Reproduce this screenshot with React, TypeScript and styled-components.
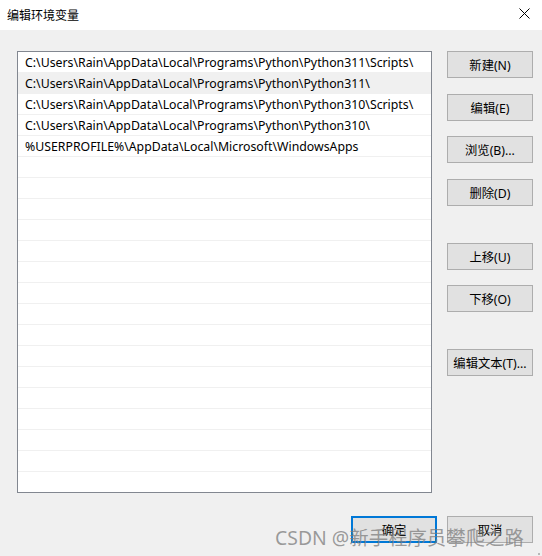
import React from "react";
import styled, { createGlobalStyle } from "styled-components";

const Global = createGlobalStyle`
  html, body { margin: 0; padding: 0; background: #f0f0f0; }
  body { font-family: "Noto Sans", "Noto Sans CJK SC", sans-serif; }
  * { box-sizing: border-box; }
`;

const Window = styled.div`
  position: relative;
  width: 542px;
  height: 556px;
  background: #f0f0f0;
  display: flex;
  flex-direction: column;
  overflow: hidden;
  font-family: "Noto Sans", "Noto Sans CJK SC", sans-serif;
  font-size: 12px;
  color: #000;
`;

const TitleBar = styled.div`
  height: 30px;
  background: #fff;
  display: flex;
  align-items: center;
  justify-content: space-between;
  padding: 0 6px 1px 7px;
`;

const Title = styled.div`
  font-size: 12px;
  color: #000;
`;

const CloseBtn = styled.div`
  width: 36px;
  height: 30px;
  display: flex;
  align-items: center;
  justify-content: center;
  margin-right: -6px;
  margin-top: -2px;
`;

const Body = styled.div`
  flex: 1;
  display: flex;
  flex-direction: column;
  padding: 21px 9px 0 17px;
`;

const Main = styled.div`
  display: flex;
  gap: 15px;
`;

const ListBox = styled.div`
  width: 415px;
  height: 442px;
  border: 1px solid #828790;
  background: #fff;
  overflow: hidden;
`;

const Row = styled.div<{ $selected?: boolean }>`
  height: 21px;
  border-bottom: 1px solid #f0f0f0;
  background: ${(p) => (p.$selected ? "#f0f0f0" : "#fff")};
  padding: 1px 0 0 7px;
  display: flex;
  align-items: center;
  white-space: nowrap;
  font-size: 12.3px;
  color: #000;
`;

const Side = styled.div`
  width: 86px;
  display: flex;
  flex-direction: column;
`;

const Btn = styled.div<{ $top: number; $default?: boolean }>`
  margin-top: ${(p) => p.$top}px;
  width: 86px;
  height: 27px;
  background: #e1e1e1;
  border: ${(p) => (p.$default ? "2px solid #0078d7" : "1px solid #adadad")};
  display: flex;
  align-items: center;
  justify-content: center;
  font-size: 12.3px;
  color: #000;
`;

const Footer = styled.div`
  display: flex;
  justify-content: flex-end;
  gap: 10px;
  margin-top: 23px;
`;

const Watermark = styled.div`
  position: absolute;
  left: 275px;
  top: 522px;
  font-family: "Noto Sans", "Noto Sans CJK SC", sans-serif;
  font-size: 19.4px;
  color: rgba(125, 125, 125, 0.75);
  white-space: nowrap;
  pointer-events: none;
`;

const ResizeDot = styled.div`
  position: absolute;
  right: 2px;
  bottom: 1px;
  width: 2px;
  height: 2px;
  background: #b8b8b8;
`;

const rows = [
  "C:\\Users\\Rain\\AppData\\Local\\Programs\\Python\\Python311\\Scripts\\",
  "C:\\Users\\Rain\\AppData\\Local\\Programs\\Python\\Python311\\",
  "C:\\Users\\Rain\\AppData\\Local\\Programs\\Python\\Python310\\Scripts\\",
  "C:\\Users\\Rain\\AppData\\Local\\Programs\\Python\\Python310\\",
  "%USERPROFILE%\\AppData\\Local\\Microsoft\\WindowsApps",
];

export default function App() {
  const all = [...rows, ...Array(17).fill("")];
  return (
    <Window>
      <Global />
      <TitleBar>
        <Title>编辑环境变量</Title>
        <CloseBtn>
          <svg width="11" height="11" viewBox="0 0 11 11">
            <path d="M0.5 0.5 L10.5 10.5 M10.5 0.5 L0.5 10.5" stroke="#000" strokeWidth="1" />
          </svg>
        </CloseBtn>
      </TitleBar>
      <Body>
        <Main>
          <ListBox>
            {all.map((t, i) => (
              <Row key={i} $selected={i === 1}>
                {t}
              </Row>
            ))}
          </ListBox>
          <Side>
            <Btn $top={0}>新建(N)</Btn>
            <Btn $top={16}>编辑(E)</Btn>
            <Btn $top={15}>浏览(B)...</Btn>
            <Btn $top={16}>删除(D)</Btn>
            <Btn $top={37}>上移(U)</Btn>
            <Btn $top={15}>下移(O)</Btn>
            <Btn $top={37}>编辑文本(T)...</Btn>
          </Side>
        </Main>
        <Footer>
          <Btn $top={0} $default>确定</Btn>
          <Btn $top={0}>取消</Btn>
        </Footer>
      </Body>
      <Watermark>CSDN @新手程序员攀爬之路</Watermark>
      <ResizeDot />
    </Window>
  );
}
